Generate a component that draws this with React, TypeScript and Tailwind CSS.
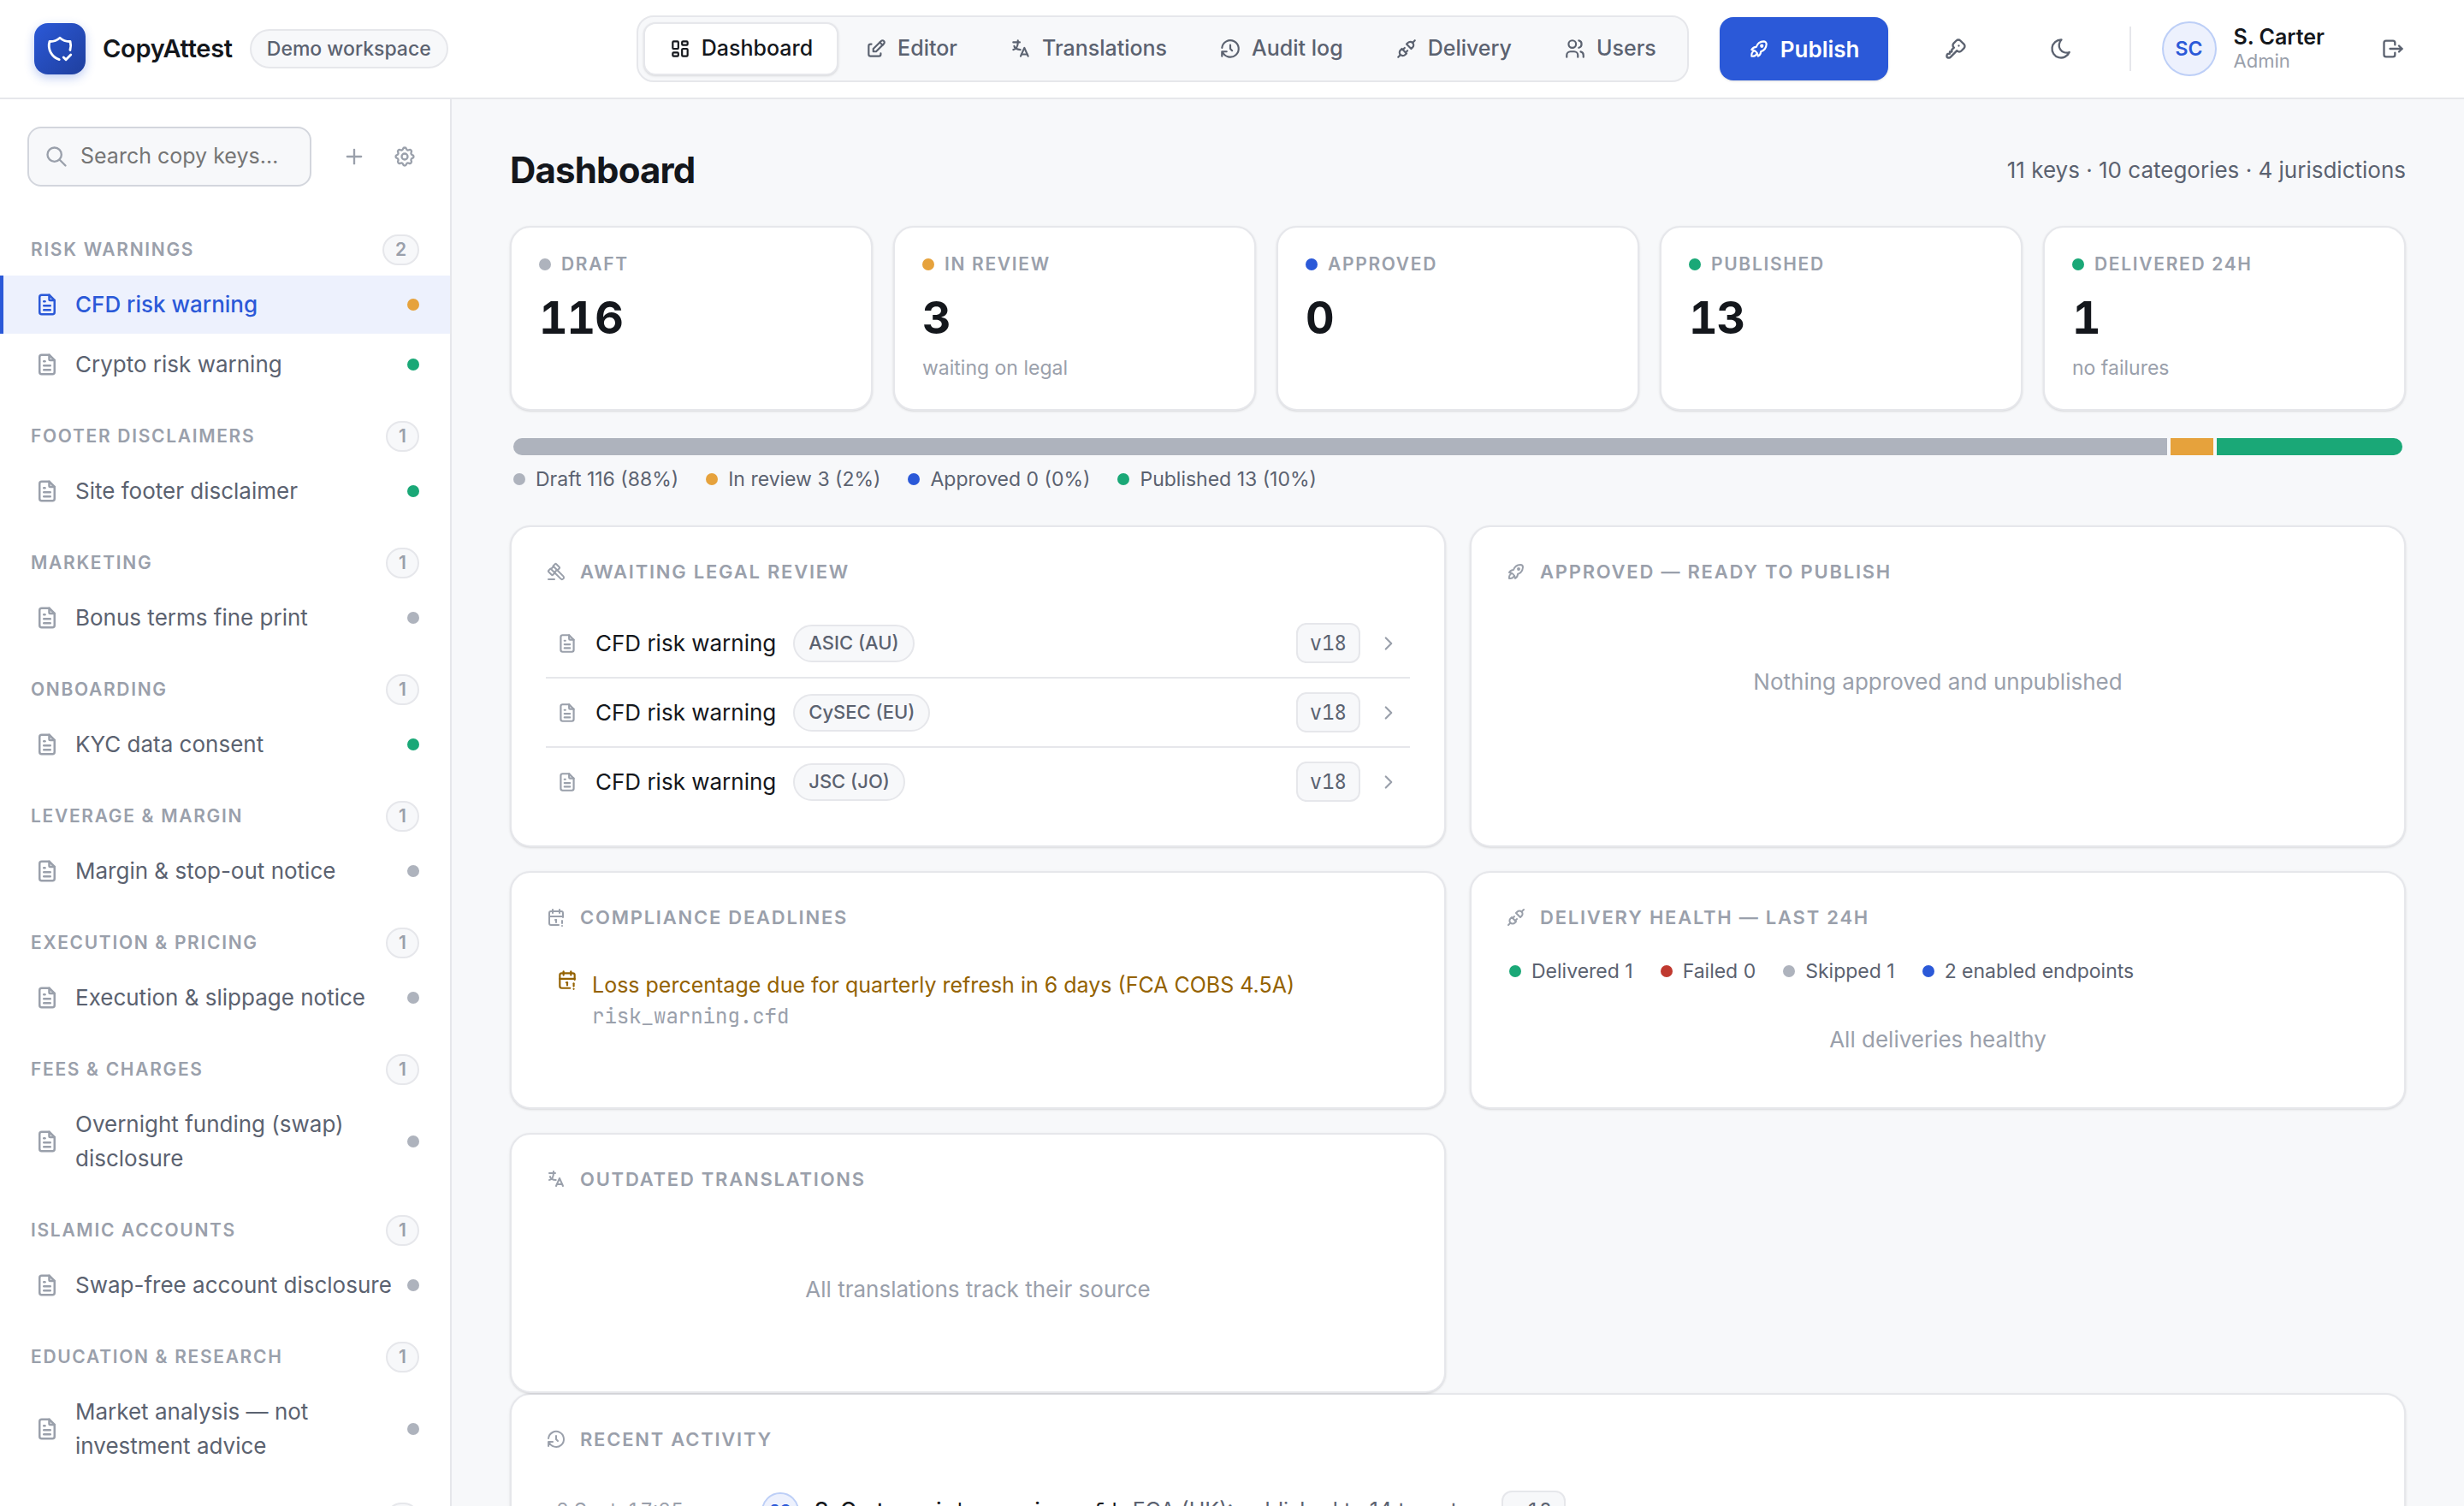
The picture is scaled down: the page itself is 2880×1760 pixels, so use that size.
import React, { useState } from 'react';
import {
    TbCalendarExclamation,
    TbChevronRight,
    TbEdit,
    TbFileText,
    TbGavel,
    TbHistory,
    TbKey,
    TbLanguage,
    TbLayoutDashboard,
    TbLogout,
    TbMoon,
    TbPlugConnected,
    TbPlus,
    TbRocket,
    TbSearch,
    TbSettings,
    TbShieldCheck,
    TbUsers,
} from 'react-icons/tb';
import type { IconType } from 'react-icons';

type Tone = 'gray' | 'amber' | 'blue' | 'green' | 'red';

const TONES: Record<Tone, string> = {
    gray: 'bg-[#aeb3bd]',
    amber: 'bg-[#e6a23c]',
    blue: 'bg-[#2b59d8]',
    green: 'bg-[#1aa877]',
    red: 'bg-[#c0392f]',
};

const NAV: { label: string; icon: IconType }[] = [
    { label: 'Dashboard', icon: TbLayoutDashboard },
    { label: 'Editor', icon: TbEdit },
    { label: 'Translations', icon: TbLanguage },
    { label: 'Audit log', icon: TbHistory },
    { label: 'Delivery', icon: TbPlugConnected },
    { label: 'Users', icon: TbUsers },
];

const CATEGORIES: { name: string; keys: { title: string; tone: Tone }[] }[] = [
    {
        name: 'Risk warnings',
        keys: [
            { title: 'CFD risk warning', tone: 'amber' },
            { title: 'Crypto risk warning', tone: 'green' },
        ],
    },
    { name: 'Footer disclaimers', keys: [{ title: 'Site footer disclaimer', tone: 'green' }] },
    { name: 'Marketing', keys: [{ title: 'Bonus terms fine print', tone: 'gray' }] },
    { name: 'Onboarding', keys: [{ title: 'KYC data consent', tone: 'green' }] },
    { name: 'Leverage & margin', keys: [{ title: 'Margin & stop-out notice', tone: 'gray' }] },
    { name: 'Execution & pricing', keys: [{ title: 'Execution & slippage notice', tone: 'gray' }] },
    { name: 'Fees & charges', keys: [{ title: 'Overnight funding (swap) disclosure', tone: 'gray' }] },
    { name: 'Islamic accounts', keys: [{ title: 'Swap-free account disclosure', tone: 'gray' }] },
    { name: 'Education & research', keys: [{ title: 'Market analysis — not investment advice', tone: 'gray' }] },
    { name: 'Complaints', keys: [{ title: 'Complaints procedure', tone: 'gray' }] },
];

const STATS: { label: string; value: number; tone: Tone; hint?: string }[] = [
    { label: 'Draft', value: 116, tone: 'gray' },
    { label: 'In review', value: 3, tone: 'amber', hint: 'waiting on legal' },
    { label: 'Approved', value: 0, tone: 'blue' },
    { label: 'Published', value: 13, tone: 'green' },
    { label: 'Delivered 24h', value: 1, tone: 'green', hint: 'no failures' },
];

const REVIEWS = ['ASIC (AU)', 'CySEC (EU)', 'JSC (JO)'];

const Dot = ({ tone }: { tone: Tone }) => <span className={`size-3.5 shrink-0 rounded-full ${TONES[tone]}`} />;

const Tag = ({ children }: { children: React.ReactNode }) => (
    <span className="flex h-[47px] shrink-0 items-center rounded-xl border-2 border-[#e6e7eb] bg-[#f7f8fa] px-3.5 font-['JetBrains_Mono','DejaVu_Sans_Mono',monospace] text-2xl text-[#5b6270]">
        {children}
    </span>
);

const Legend = ({ items }: { items: { label: string; tone: Tone }[] }) => (
    <ul className="mx-1 flex h-[38px] flex-wrap items-center gap-8">
        {items.map((item) => (
            <li key={item.label} className="flex items-center gap-3 text-[23px] text-[#5b6270]">
                <Dot tone={item.tone} />
                {item.label}
            </li>
        ))}
    </ul>
);

const Panel = ({ title, icon: Icon, children }: { title: string; icon: IconType; children: React.ReactNode }) => (
    <section className="rounded-3xl border-2 border-[#e6e7eb] bg-white px-10 pt-9 pb-[35px] shadow-sm">
        <h2 className="mb-7 flex h-8 items-center gap-4 text-[22px] font-semibold tracking-[0.08em] text-[#9aa0ab] uppercase">
            <Icon className="size-6" />
            {title}
        </h2>
        {children}
    </section>
);

const Empty = ({ children, compact = false }: { children: React.ReactNode; compact?: boolean }) => (
    <p className={`text-center text-[26px] leading-[41px] text-[#9aa0ab] ${compact ? 'pt-10 pb-6' : 'py-16'}`}>
        {children}
    </p>
);

const Header = () => {
    const [active, setActive] = useState('Dashboard');

    return (
        <header className="flex h-[116px] shrink-0 items-center gap-9 border-b-2 border-[#e6e7eb] bg-white px-10">
            <div className="mr-auto flex items-center gap-5">
                <span className="flex size-15 items-center justify-center rounded-2xl bg-linear-to-br from-[#2b59d8] to-[#1f3f9e] text-white shadow-[0_4px_12px_rgba(43,89,216,0.3)]">
                    <TbShieldCheck className="size-[34px]" />
                </span>
                <span className="text-[29px] font-semibold tracking-[-0.01em] text-[#14171c]">CopyAttest</span>
                <span className="flex h-[46px] items-center rounded-full border-2 border-[#e6e7eb] bg-[#f7f8fa] px-[18px] text-[23px] font-medium text-[#5b6270]">
                    Demo workspace
                </span>
            </div>

            <nav className="flex h-[78px] items-center gap-px rounded-[20px] border-2 border-[#e6e7eb] bg-[#f7f8fa] px-1.5">
                {NAV.map(({ label, icon: Icon }) => (
                    <button
                        key={label}
                        type="button"
                        onClick={() => setActive(label)}
                        className={`flex h-[62px] items-center gap-3 rounded-[14px] border-2 px-7 text-[25px] font-medium ${
                            active === label
                                ? 'border-[#e6e7eb] bg-white text-[#14171c] shadow-sm'
                                : 'border-transparent text-[#5b6270]'
                        }`}
                    >
                        <Icon className="size-[26px]" />
                        {label}
                    </button>
                ))}
            </nav>

            <button
                type="button"
                className="flex h-[74px] items-center gap-3 rounded-2xl bg-[#2b59d8] px-[33px] text-[26px] font-semibold text-white shadow-sm"
            >
                <TbRocket className="size-[26px]" />
                Publish
            </button>
            <button type="button" aria-label="Change password" className="flex w-[87px] justify-center text-[#5b6270]">
                <TbKey className="size-7" />
            </button>
            <button type="button" aria-label="Dark mode" className="flex w-[87px] justify-center text-[#5b6270]">
                <TbMoon className="size-7" />
            </button>
            <span className="h-13 w-0.5 bg-[#e6e7eb]" />
            <div className="flex items-center gap-5">
                <span className="flex size-16 items-center justify-center rounded-full border-2 border-[#bdcff7] bg-[#edf1fd] text-[23px] font-semibold text-[#2b59d8]">
                    SC
                </span>
                <div>
                    <p className="text-[25px] leading-7 font-semibold text-[#14171c]">S. Carter</p>
                    <p className="text-[22px] leading-7 text-[#9aa0ab]">Admin</p>
                </div>
            </div>
            <button type="button" aria-label="Sign out" className="flex w-[87px] justify-center text-[#5b6270]">
                <TbLogout className="size-7" />
            </button>
        </header>
    );
};

const Sidebar = () => (
    <aside className="w-[528px] shrink-0 overflow-hidden border-r-2 border-[#e6e7eb] bg-white pt-8">
        <div className="mb-14 flex items-center pr-6 pl-8">
            <label className="mr-5 flex h-[70px] min-w-0 flex-1 items-center gap-3.5 rounded-2xl border-2 border-[#d3d6dd] bg-[#f7f8fa] pl-[18px]">
                <TbSearch className="size-7 shrink-0 text-[#9aa0ab]" />
                <input
                    type="text"
                    aria-label="Search copy keys"
                    placeholder="Search copy keys…"
                    className="w-full min-w-0 bg-transparent text-[25px] outline-none placeholder:text-[#757575]"
                />
            </label>
            <button type="button" aria-label="New key" className="flex w-[59px] justify-center text-[#9aa0ab]">
                <TbPlus className="size-7" />
            </button>
            <button type="button" aria-label="Categories" className="flex w-[59px] justify-center text-[#9aa0ab]">
                <TbSettings className="size-7" />
            </button>
        </div>

        {CATEGORIES.map((category) => (
            <section key={category.name} className="mb-8">
                <h2 className="mb-3 flex h-9 items-center justify-between px-9 text-[21px] font-semibold tracking-[0.08em] text-[#9aa0ab] uppercase">
                    {category.name}
                    <span className="flex h-9 items-center rounded-full border-2 border-[#e6e7eb] bg-[#f7f8fa] px-[13px] tracking-normal">
                        {category.keys.length}
                    </span>
                </h2>
                <ul className="flex flex-col gap-0.5">
                    {category.keys.map((key) => {
                        const selected = key.title === 'CFD risk warning';
                        return (
                            <li key={key.title}>
                                <a
                                    href="#"
                                    className={`flex items-center gap-[18px] border-l-4 py-3.5 pr-9 pl-9 text-[26px] leading-10 ${
                                        selected
                                            ? 'border-[#2b59d8] bg-[#edf1fd] font-medium text-[#2b59d8]'
                                            : 'border-transparent text-[#5b6270]'
                                    }`}
                                >
                                    <TbFileText className={`size-[30px] shrink-0 ${selected ? '' : 'text-[#9aa0ab]'}`} />
                                    <span className="flex-1">{key.title}</span>
                                    <Dot tone={key.tone} />
                                </a>
                            </li>
                        );
                    })}
                </ul>
            </section>
        ))}
    </aside>
);

const Pipeline = () => {
    const stages = STATS.slice(0, 4);
    const total = stages.reduce((sum, s) => sum + s.value, 0);

    return (
        <div className="mt-8 mb-[35px]">
            <div className="mx-1 mb-[9px] flex h-5 gap-1 overflow-hidden rounded-full">
                {stages
                    .filter((s) => s.value > 0)
                    .map((s) => (
                        <span key={s.label} className={TONES[s.tone]} style={{ flex: `${s.value} 0 0px` }} />
                    ))}
            </div>
            <Legend
                items={stages.map((s) => ({
                    label: `${s.label} ${s.value} (${Math.round((s.value / total) * 100)}%)`,
                    tone: s.tone,
                }))}
            />
        </div>
    );
};

const App = () => (
    <div className="flex h-screen flex-col overflow-hidden bg-[#f7f8fa] font-['Inter',sans-serif] text-[#14171c]">
        <Header />
        <div className="flex min-h-0 flex-1">
            <Sidebar />
            <main className="min-w-0 flex-1 overflow-hidden px-[68px] pt-[50px]">
                <div className="mb-[34px] flex h-16 items-center justify-between">
                    <h1 className="text-[42px] font-bold tracking-[-0.02em]">Dashboard</h1>
                    <p className="text-[26px] text-[#5b6270]">11 keys · 10 categories · 4 jurisdictions</p>
                </div>

                <div className="grid grid-cols-5 gap-6">
                    {STATS.map((stat) => (
                        <div
                            key={stat.label}
                            className="h-[216px] rounded-3xl border-2 border-[#e6e7eb] bg-white px-8 pt-[26px] shadow-sm"
                        >
                            <p className="flex h-[34px] items-center gap-3 text-[21px] font-semibold tracking-[0.08em] text-[#9aa0ab] uppercase">
                                <Dot tone={stat.tone} />
                                {stat.label}
                            </p>
                            <p className="mt-3 text-[52px] leading-[68px] font-bold tracking-[-0.02em] tabular-nums">
                                {stat.value}
                            </p>
                            {stat.hint && <p className="mt-1.5 text-[23px] leading-9 text-[#9aa0ab]">{stat.hint}</p>}
                        </div>
                    ))}
                </div>

                <Pipeline />

                <div className="grid grid-cols-2 gap-7">
                    <Panel title="Awaiting legal review" icon={TbGavel}>
                        <ul>
                            {REVIEWS.map((region) => (
                                <li key={region} className="border-b-2 border-[#e6e7eb] last:border-b-0">
                                    <a href="#" className="flex items-center gap-5 px-3 py-4 text-[26px]">
                                        <TbFileText className="size-[26px] text-[#9aa0ab]" />
                                        CFD risk warning
                                        <span className="flex h-11 items-center rounded-full border-2 border-[#e6e7eb] bg-[#f7f8fa] px-4 text-[22px] font-medium text-[#5b6270]">
                                            {region}
                                        </span>
                                        <span className="ml-auto">
                                            <Tag>v18</Tag>
                                        </span>
                                        <TbChevronRight className="size-[26px] text-[#9aa0ab]" />
                                    </a>
                                </li>
                            ))}
                        </ul>
                    </Panel>

                    <Panel title="Approved — ready to publish" icon={TbRocket}>
                        <Empty>Nothing approved and unpublished</Empty>
                    </Panel>

                    <Panel title="Compliance deadlines" icon={TbCalendarExclamation}>
                        <a href="#" className="flex gap-4 px-3 py-4 text-[25px] text-[#946200]">
                            <TbCalendarExclamation className="size-[26px] shrink-0" />
                            <span className="flex flex-col">
                                <span className="leading-[38px]">
                                    Loss percentage due for quarterly refresh in 6 days (FCA COBS 4.5A)
                                </span>
                                <span className="font-['JetBrains_Mono','DejaVu_Sans_Mono',monospace] text-2xl leading-9 text-[#9aa0ab]">
                                    risk_warning.cfd
                                </span>
                            </span>
                        </a>
                    </Panel>

                    <Panel title="Delivery health — last 24h" icon={TbPlugConnected}>
                        <Legend
                            items={[
                                { label: 'Delivered 1', tone: 'green' },
                                { label: 'Failed 0', tone: 'red' },
                                { label: 'Skipped 1', tone: 'gray' },
                                { label: '2 enabled endpoints', tone: 'blue' },
                            ]}
                        />
                        <Empty compact>All deliveries healthy</Empty>
                    </Panel>

                    <Panel title="Outdated translations" icon={TbLanguage}>
                        <Empty>All translations track their source</Empty>
                    </Panel>
                </div>

                <Panel title="Recent activity" icon={TbHistory}>
                    <div className="flex items-center gap-[18px] px-3 py-4 text-[25px]">
                        <time className="w-[222px] text-[23px] text-[#9aa0ab] tabular-nums">8 Sept, 17:25</time>
                        <span className="flex size-11 items-center justify-center rounded-full border-2 border-[#bdcff7] bg-[#edf1fd] text-lg font-semibold text-[#2b59d8]">
                            SC
                        </span>
                        <span className="font-medium">S. Carter</span>
                        <span className="font-['JetBrains_Mono','DejaVu_Sans_Mono',monospace] text-2xl">
                            risk_warning.cfd
                        </span>
                        <span className="mr-5 text-[#5b6270]">FCA (UK): published to 14 targets</span>
                        <Tag>v18</Tag>
                    </div>
                </Panel>
            </main>
        </div>
    </div>
);

export default App;
